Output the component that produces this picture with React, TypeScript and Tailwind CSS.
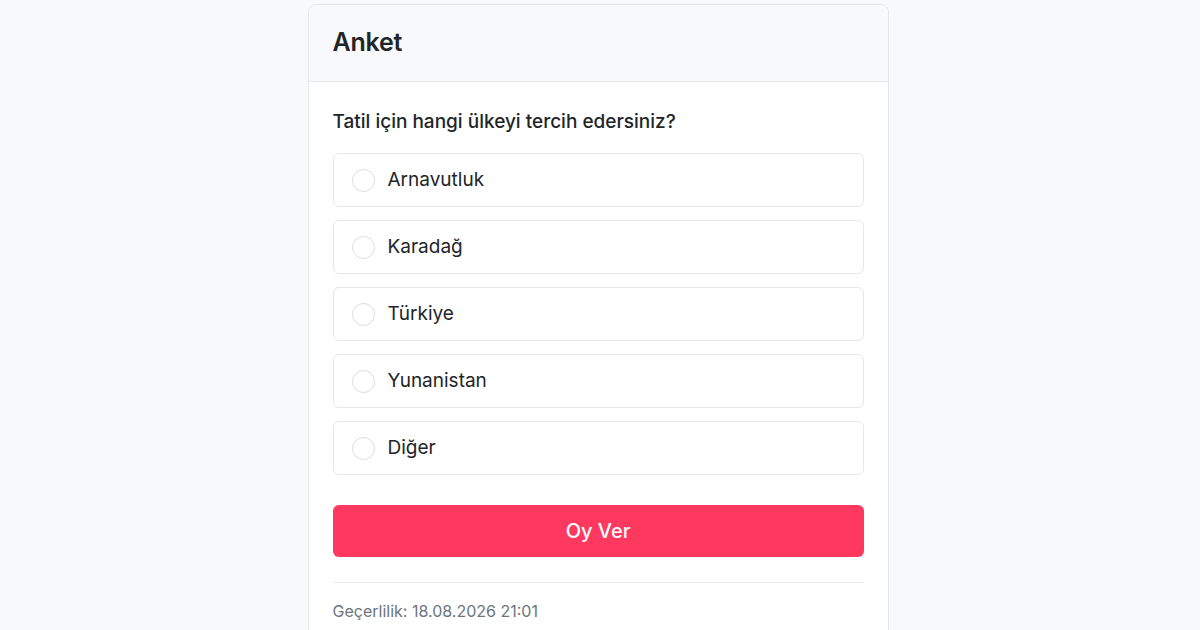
const options = ['Arnavutluk', 'Karadağ', 'Türkiye', 'Yunanistan', 'Diğer'];

export default function App() {
  return (
    <div
      className="min-h-screen bg-[#f8f9fa] pt-1 flex justify-center pr-[4px]"
      style={{ fontFamily: 'Inter, "Noto Sans", sans-serif' }}
    >
      <div className="w-[581px] self-start rounded-lg border border-[#e5e7eb] bg-white overflow-hidden">
        {/* Başlık */}
        <div className="h-[77px] bg-[#f8f9fa] border-b border-[#e5e7eb] px-6 flex items-center">
          <h1 className="text-[25px] font-semibold text-[#212529] tracking-[-0.01em]">Anket</h1>
        </div>

        {/* Soru */}
        <div className="px-6 pt-[26px] pb-6">
          <p className="text-[19px] font-medium text-[#212529] leading-7 mb-[17px]">
            Tatil için hangi ülkeyi tercih edersiniz?
          </p>
          <div className="flex flex-col gap-[13px]">
            {options.map((o) => (
              <label
                key={o}
                className="h-[54px] flex items-center gap-[13px] rounded-md border border-[#e5e7eb] px-[18px] cursor-pointer"
              >
                <span className="w-[23px] h-[23px] rounded-full border border-[#d9dde1] bg-white" />
                <span className="text-[19px] text-[#212529]">{o}</span>
              </label>
            ))}
          </div>
          <button className="mt-[30px] w-full h-[52px] rounded-md bg-[#ff3860] text-white text-[20px] font-medium">
            Oy Ver
          </button>
          <div className="mt-[25px] border-t border-[#e9ecef] pt-4">
            <p className="text-[16px] text-[#6c757d]">Geçerlilik: 18.08.2026 21:01</p>
          </div>
        </div>
      </div>
    </div>
  );
}
